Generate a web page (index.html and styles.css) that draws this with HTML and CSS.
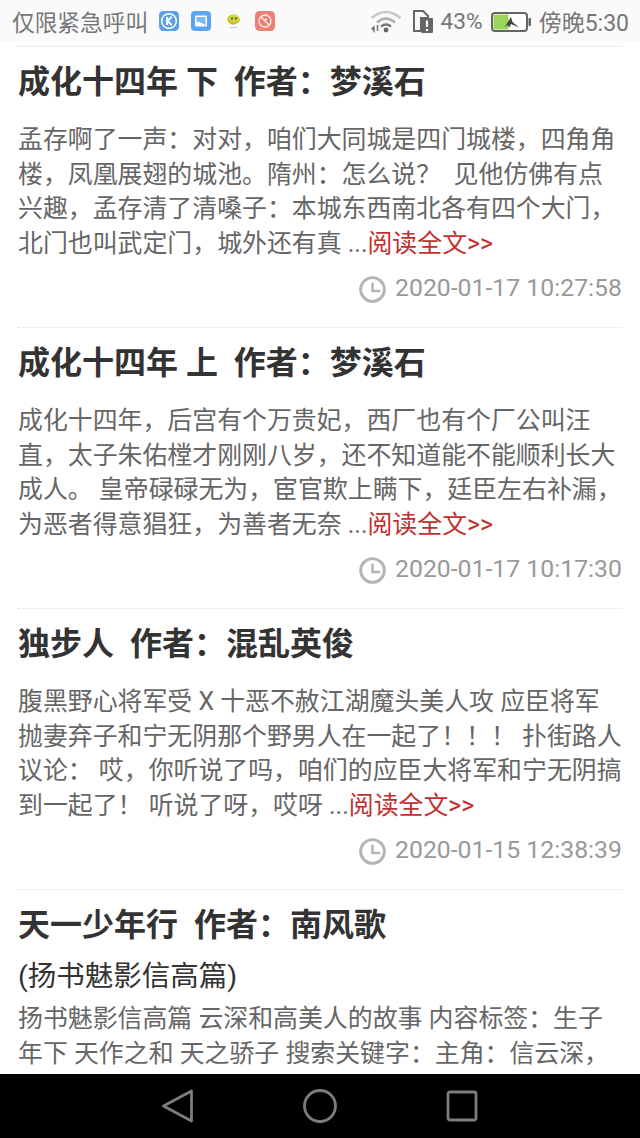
FILE: index.html
```html
<!DOCTYPE html>
<html lang="zh-CN">
<head>
<meta charset="utf-8">
<title>文章列表</title>
<link rel="stylesheet" href="styles.css">
</head>
<body>
<header class="status">
  <span class="carrier">仅限紧急呼叫</span>
  <svg class="app" viewBox="0 0 20 20"><rect width="20" height="20" rx="4.500" fill="#5a9fe8"/><circle cx="10" cy="10" r="7.300" fill="none" stroke="#fff" stroke-width="1.500"/><path d="M8 6v8M12.800 5.800 8.500 10l4.300 4.200" fill="none" stroke="#fff" stroke-width="2"/></svg>
  <svg class="app" viewBox="0 0 20 20"><rect width="20" height="20" rx="4" fill="#5aa5ee"/><rect x="4" y="4.500" width="12" height="11" rx="1" fill="#fff"/><rect x="5.500" y="6" width="9" height="8" fill="#7db8f2"/><path d="M5.500 10.500l4 1 5 2.500H5.500z" fill="#fff"/></svg>
  <svg class="app" viewBox="0 0 20 20"><ellipse cx="10.500" cy="8.500" rx="6.500" ry="5" fill="#c9d43c"/><path d="M5 9q5 6 11 0q-3 4.500-6 4.500T5 9z" fill="#e0a030"/><circle cx="9" cy="7.500" r="1" fill="#444"/><circle cx="13" cy="7.500" r="1" fill="#444"/><path d="M7 16.500h7" stroke="#bccbd0" stroke-width="1.200"/></svg>
  <svg class="app" viewBox="0 0 20 20"><rect width="20" height="20" rx="4.500" fill="#ec7f76"/><circle cx="10" cy="10" r="6" fill="none" stroke="#fff" stroke-opacity=".85" stroke-width="1.300"/><path d="M6 6l8 8M8 8.500h4" stroke="#fff" stroke-opacity=".85" stroke-width="1.300"/></svg>
  <span class="status-gap"></span>
  <svg class="wifi" viewBox="0 0 32 24"><path d="M1.500 9Q16-3 30.500 9" fill="none" stroke="#c8c8c8" stroke-width="2.600"/><path d="M7 13.500Q16 5.500 25 13.500" fill="none" stroke="#b0b0b0" stroke-width="2.600"/><path d="M11 17.500q5-4 10 0" fill="none" stroke="#777" stroke-width="2.400"/><circle cx="16" cy="21" r="2.400" fill="#666"/><path d="M2 19.500l2-1.500v4zM7.500 16v6" fill="#777" stroke="#777" stroke-width="1.500"/></svg>
  <svg class="sim" viewBox="0 0 20 24"><path d="M1 2h9l5 5v2H8v13H1z" fill="none" stroke="#666" stroke-width="2"/><rect x="8" y="9" width="12" height="15" rx="1" fill="#666"/><path d="M14 11.500v6.500M14 20v2" stroke="#fff" stroke-width="2.200"/></svg>
  <span class="pct">43%</span>
  <svg class="battery" viewBox="0 0 40 20"><rect x="1" y="1" width="35" height="18" rx="3" fill="#fff" stroke="#666" stroke-width="2"/><rect x="2.500" y="2.500" width="15" height="15" fill="#9bd65a"/><rect x="37.500" y="6" width="2.500" height="8" rx="1" fill="#666"/><path d="M13.500 15.500 20 5l1.500 5 6.500 5.500-8-3.500-1.500 3.500-2-2.500z" fill="#444"/></svg>
  <span class="time-text">傍晚5:30</span>
</header>

<main class="list">
  <article class="post">
    <h2 class="title">成化十四年 下&nbsp; 作者：梦溪石</h2>
    <p class="excerpt">孟存啊了一声：对对，咱们大同城是四门城楼，四角角<br>楼，凤凰展翅的城池。隋州：怎么说？&nbsp; 见他仿佛有点<br>兴趣，孟存清了清嗓子：本城东西南北各有四个大门，<br>北门也叫武定门，城外还有真 ...<a class="more">阅读全文&gt;&gt;</a></p>
    <div class="meta">
      <svg class="clock" viewBox="0 0 28 28"><circle cx="14" cy="14" r="12.300" fill="none" stroke="#b4b4b4" stroke-width="3"/><path d="M14 7v8.500h8" fill="none" stroke="#b4b4b4" stroke-width="2.600"/></svg>
      <time>2020-01-17 10:27:58</time>
    </div>
  </article>
  <article class="post">
    <h2 class="title">成化十四年 上&nbsp; 作者：梦溪石</h2>
    <p class="excerpt">成化十四年，后宫有个万贵妃，西厂也有个厂公叫汪<br>直，太子朱佑樘才刚刚八岁，还不知道能不能顺利长大<br>成人。 皇帝碌碌无为，宦官欺上瞒下，廷臣左右补漏，<br>为恶者得意猖狂，为善者无奈 ...<a class="more">阅读全文&gt;&gt;</a></p>
    <div class="meta">
      <svg class="clock" viewBox="0 0 28 28"><circle cx="14" cy="14" r="12.300" fill="none" stroke="#b4b4b4" stroke-width="3"/><path d="M14 7v8.500h8" fill="none" stroke="#b4b4b4" stroke-width="2.600"/></svg>
      <time>2020-01-17 10:17:30</time>
    </div>
  </article>
  <article class="post">
    <h2 class="title">独步人&nbsp; 作者：混乱英俊</h2>
    <p class="excerpt">腹黑野心将军受 X 十恶不赦江湖魔头美人攻 应臣将军<br>抛妻弃子和宁无阴那个野男人在一起了！！！ 扑街路人<br>议论： 哎，你听说了吗，咱们的应臣大将军和宁无阴搞<br>到一起了！ 听说了呀，哎呀 ...<a class="more">阅读全文&gt;&gt;</a></p>
    <div class="meta">
      <svg class="clock" viewBox="0 0 28 28"><circle cx="14" cy="14" r="12.300" fill="none" stroke="#b4b4b4" stroke-width="3"/><path d="M14 7v8.500h8" fill="none" stroke="#b4b4b4" stroke-width="2.600"/></svg>
      <time>2020-01-15 12:38:39</time>
    </div>
  </article>
  <article class="post">
    <h2 class="title">天一少年行&nbsp; 作者：南风歌</h2>
    <div class="subtitle">(扬书魅影信高篇)</div>
    <p class="excerpt">扬书魅影信高篇 云深和高美人的故事 内容标签：生子<br>年下 天作之和 天之骄子 搜索关键字：主角：信云深，</p>
  </article>
</main>

<nav class="navbar">
  <svg class="nav-icon" viewBox="0 0 36 36"><path d="M31.500 3V33L3.500 18Z" fill="none" stroke="#7d7d7d" stroke-width="2.800" stroke-linejoin="round"/></svg>
  <svg class="nav-icon" viewBox="0 0 36 36"><circle cx="18" cy="18" r="15.500" fill="none" stroke="#7d7d7d" stroke-width="2.800"/></svg>
  <svg class="nav-icon" viewBox="0 0 36 36"><rect x="4" y="4" width="28" height="28" rx="2" fill="none" stroke="#7d7d7d" stroke-width="2.800"/></svg>
</nav>
</body>
</html>
```

FILE: styles.css
```css
* { box-sizing: border-box; }
html, body { margin: 0; padding: 0; }
body {
  width: 640px;
  height: 1138px;
  overflow: hidden;
  display: flex;
  flex-direction: column;
  background: #fff;
  font-family: Roboto, "Noto Sans CJK SC", "Liberation Sans", sans-serif;
}
.status {
  flex: none;
  height: 42px;
  padding: 0 11px 0 12px;
  display: flex;
  align-items: center;
  background: #fafafa;
  color: #777;
  font-size: 22.700px;
}
.carrier { margin-right: 11px; }
.app { width: 20px; height: 20px; margin-right: 12px; flex: none; }
.status-gap { flex: 1; }
.wifi { width: 32px; height: 24px; margin-right: 11px; }
.sim { width: 20px; height: 24px; margin-right: 8px; }
.pct { margin-right: 8px; }
.battery { width: 40px; height: 20px; margin: 2px 8px 0 0; }
.time-text { font-size: 23px; }
.list {
  flex: 1;
  min-height: 0;
  overflow: hidden;
  padding: 4px 18px 0;
}
.post {
  height: 281px;
  border-top: 1px dotted #dcdcdc;
  padding-top: 13px;
}
.title {
  margin: 0;
  font-size: 32px;
  line-height: 44px;
  font-weight: 700;
  color: #333;
}
.subtitle {
  font-size: 28.500px;
  line-height: 38px;
  margin-top: 11px;
  color: #333;
}
.excerpt {
  margin: 19px 0 0;
  font-size: 24.900px;
  line-height: 34.700px;
  color: #666;
}
.subtitle + .excerpt { margin-top: 6px; }
.more { color: #c12f2f; }
.meta {
  display: flex;
  justify-content: flex-end;
  align-items: center;
  margin-top: 9px;
  color: #999;
  font-size: 24.800px;
  line-height: 34px;
}
.clock { width: 27px; height: 27px; margin: 3px 9px 0 0; }
.navbar {
  flex: none;
  height: 64px;
  background: #000;
  display: flex;
  justify-content: center;
  align-items: center;
  gap: 106px;
}
.nav-icon { width: 36px; height: 36px; }
```
